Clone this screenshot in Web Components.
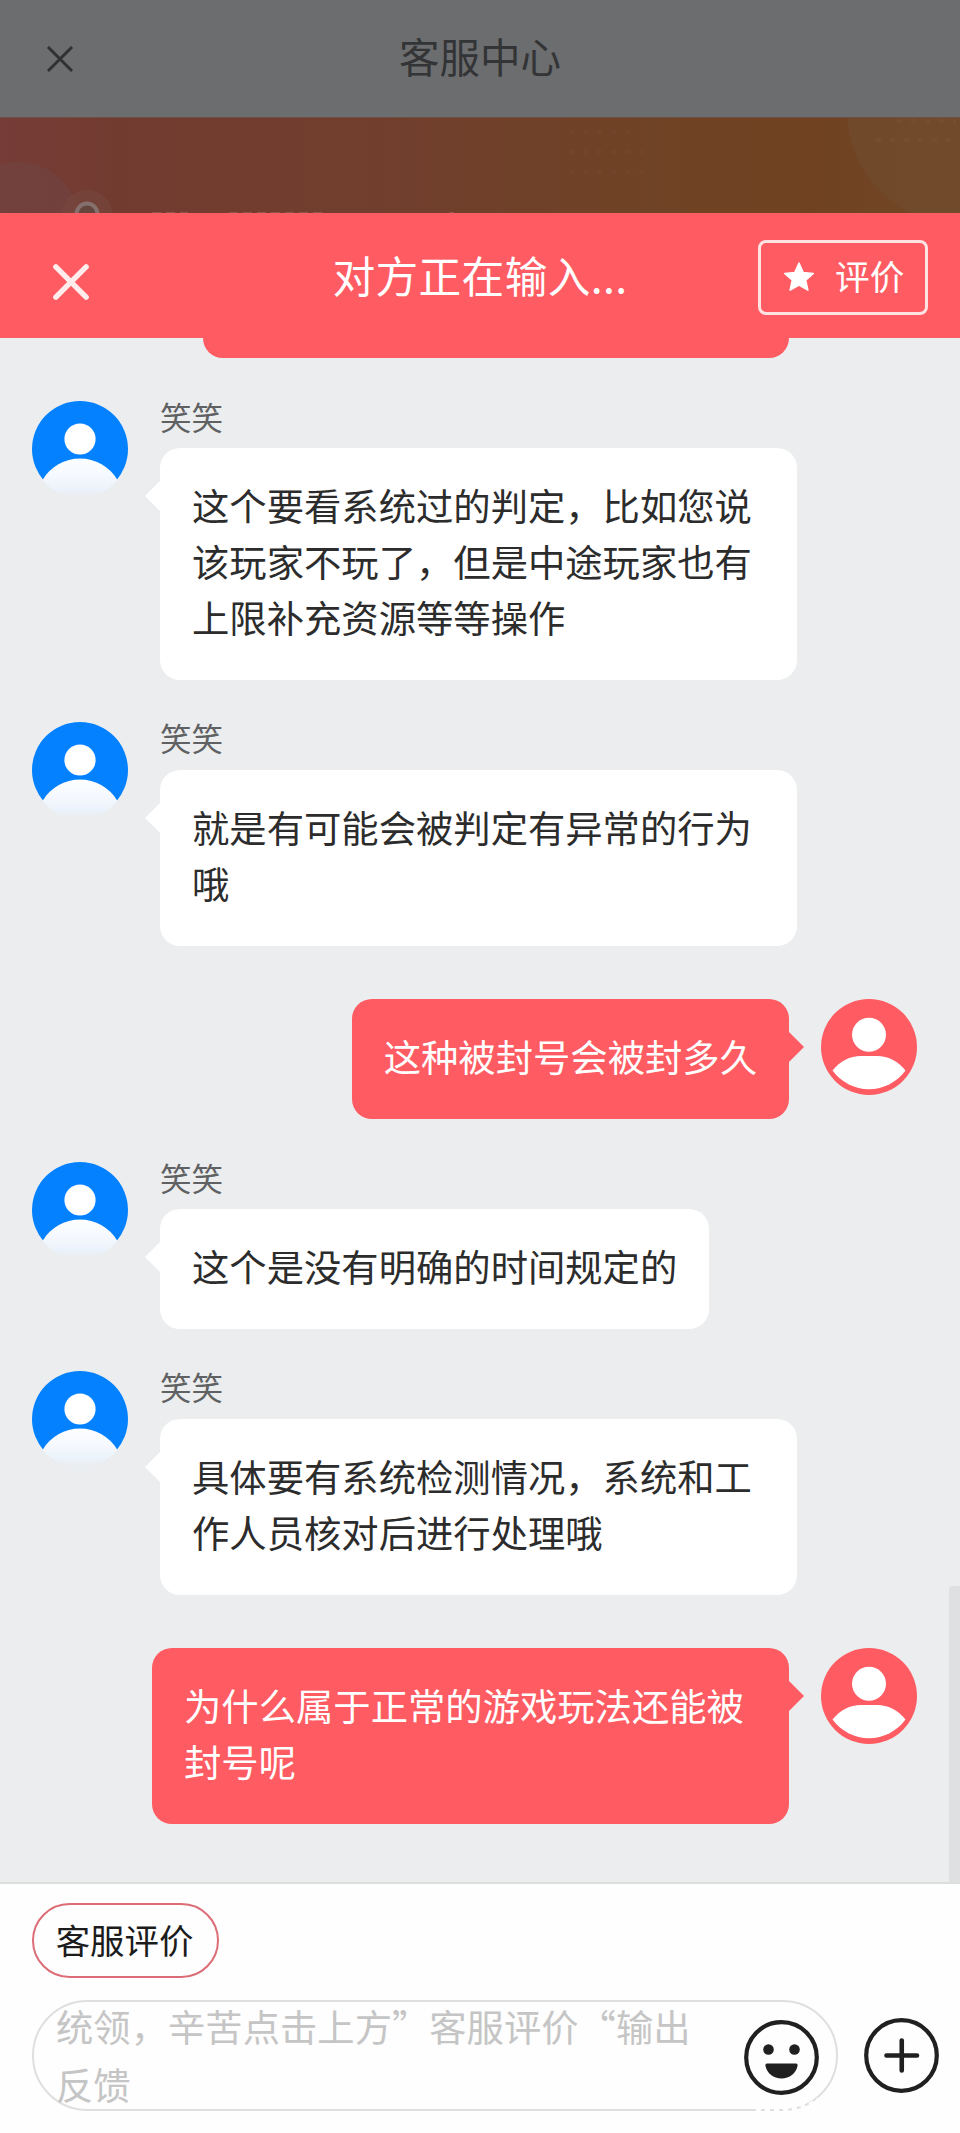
<!DOCTYPE html>
<html lang="zh-CN">
<head>
<meta charset="utf-8">
<title>客服中心</title>
<style>
html,body{margin:0;padding:0;background:#ebedee}
body{width:960px;height:2133px;overflow:hidden;font-family:"Noto Sans CJK SC","Noto Sans",sans-serif;color:#2d2d2d}
</style>
</head>
<body>
<service-page>
  <dimmed-bar slot="top">客服中心</dimmed-bar>
  <promo-banner slot="top"></promo-banner>
  <chat-header slot="top" action="评价">对方正在输入...</chat-header>
  <chat-message name="笑笑">这个要看系统过的判定，比如您说该玩家不玩了，但是中途玩家也有上限补充资源等等操作</chat-message>
  <chat-message name="笑笑">就是有可能会被判定有异常的行为哦</chat-message>
  <own-message>这种被封号会被封多久</own-message>
  <chat-message name="笑笑">这个是没有明确的时间规定的</chat-message>
  <chat-message name="笑笑">具体要有系统检测情况，系统和工作人员核对后进行处理哦</chat-message>
  <own-message>为什么属于正常的游戏玩法还能被封号呢</own-message>
  <chat-composer slot="bottom" chip="客服评价">统领，辛苦点击上方”客服评价“输出反馈</chat-composer>
</service-page>
<script>
const define = (name, render) => customElements.define(name, class extends HTMLElement {
  constructor() {
    super();
    this.attachShadow({ mode: "open" });
  }
  connectedCallback() {
    const t = document.createElement("template");
    t.innerHTML = render(this);
    this.shadowRoot.replaceChildren(t.content.cloneNode(true));
  }
});

define("service-page", () => `
<style>
:host{display:flex;flex-direction:column;width:960px;height:2133px;overflow:hidden}
main{flex:1;min-height:0;overflow:hidden;position:relative;background:#ebedee;display:flex;flex-direction:column;gap:42.6px}
.previous{flex:none;width:586px;height:20px;margin-left:203px;background:#ff5b62;border-radius:0 0 20px 20px}
.scroll{position:absolute;right:0;bottom:0;width:11px;height:296px;background:#dfe0e2;border-radius:4px 0 0 0}
</style>
<slot name="top"></slot>
<main><div class="previous"></div><slot></slot><div class="scroll"></div></main>
<slot name="bottom"></slot>`);

define("dimmed-bar", () => `
<style>
:host{display:grid;grid-template-columns:120px 1fr 120px;align-items:center;flex:none;height:117px;background:#6c6d6f;color:#333436}
svg{margin-left:46px;display:block}
span{text-align:center;font-size:40.5px;line-height:60px;margin-top:-5px}
</style>
<svg width="28" height="28" viewBox="0 0 28 28" fill="none" stroke="#303133" stroke-width="3"><path d="M2 2 26 26M26 2 2 26"/></svg>
<span><slot></slot></span>`);

define("promo-banner", () => `
<style>:host{display:block;flex:none;height:96px}svg{display:block}</style>
<svg width="960" height="96" viewBox="0 0 960 96">
<defs><linearGradient id="g"><stop offset="0" stop-color="#763c37"/><stop offset=".12" stop-color="#723b30"/><stop offset=".4" stop-color="#713e2d"/><stop offset=".68" stop-color="#6f4325"/><stop offset=".85" stop-color="#704222"/><stop offset="1" stop-color="#704827"/></linearGradient></defs>
<rect width="960" height="96" fill="url(#g)"/>
<circle cx="18" cy="106" r="61" fill="#72423e" opacity=".8"/>
<circle cx="960" cy="-6" r="113" fill="#714b2d" opacity=".7"/>
<circle cx="87" cy="99" r="26" fill="#77463d" opacity=".65"/>
<circle cx="87" cy="97" r="10.5" fill="#65463f" stroke="#86706d" stroke-width="4"/>
<g fill="none" stroke="#7b4936" stroke-width="4" stroke-dasharray="5 9" opacity=".35"><path d="M569 15H635M569 35H648M569 55H648"/></g>
<g fill="none" stroke="#7d5638" stroke-width="4" stroke-dasharray="5 9" opacity=".4"><path d="M897 4H956M876 23H956"/></g>
<path d="M152 95.5H188M229 95.5H326M449 95.5H454" stroke="#9b6258" stroke-dasharray="9 5" opacity=".7"/>
<path d="M0 .5H960" stroke="#6d5148"/>
</svg>`);

define("chat-header", el => `
<style>
:host{display:grid;grid-template-columns:202px 1fr 202px;align-items:center;flex:none;height:125px;background:#ff5b62;color:#fff}
.close{display:block;margin:13px 0 0 51px}
.title{text-align:center;font-size:42.67px;letter-spacing:.4px;line-height:60px;white-space:nowrap;margin-top:-1px}
button{box-sizing:border-box;width:170px;height:75px;margin:3px 0 0;padding:0 0 0 21px;border:3px solid #ffe3e3;border-radius:8px;background:none;color:inherit;font:34.67px/50px "Noto Sans CJK SC",sans-serif;display:flex;align-items:center;gap:19px}
button svg{flex:none}
button span{margin-top:-4px}
</style>
<svg class="close" width="40" height="40" viewBox="0 0 41 41" fill="none" stroke="#ffecec" stroke-width="5.6" stroke-linecap="round"><path d="M5 5 36 36M36 5 5 36"/></svg>
<span class="title"><slot></slot></span>
<button><svg width="34" height="34" viewBox="0 0 34 34"><path d="M17 3 21.2 12.4 31.3 13.4 23.7 20.2 25.9 30.2 17 25 8.1 30.2 10.3 20.2 2.7 13.4 12.8 12.4Z" fill="#fff" stroke="#fff" stroke-width="1.5" stroke-linejoin="round"/></svg><span>${el.getAttribute("action")}</span></button>`);

define("agent-avatar", () => `
<style>:host{display:block;flex:none;width:96px;height:96px}svg{display:block}</style>
<svg width="96" height="96" viewBox="0 0 96 96">
<defs><clipPath id="c"><path d="M0 0H96V79H85.5A43.5 43.5 0 0 0 10.5 79H0Z"/></clipPath>
<linearGradient id="f" x1="0" y1="57" x2="0" y2="96" gradientUnits="userSpaceOnUse"><stop offset="0" stop-color="#fdfeff"/><stop offset=".5" stop-color="#f4f8fe"/><stop offset=".8" stop-color="#ebf2fb"/><stop offset="1" stop-color="#ebedee"/></linearGradient></defs>
<path d="M10.5 79A43.5 43.5 0 0 1 85.5 79A48 48 0 0 1 10.5 79Z" fill="url(#f)"/>
<circle cx="48" cy="48" r="48" fill="#0381fe" clip-path="url(#c)"/>
<circle cx="48" cy="38" r="15.6" fill="#fff"/>
</svg>`);

define("user-avatar", () => `
<style>:host{display:block;flex:none;width:96px;height:96px}svg{display:block}</style>
<svg width="96" height="96" viewBox="0 0 96 96">
<circle cx="48" cy="48" r="48" fill="#ff5b62"/>
<circle cx="48" cy="35.7" r="17" fill="#fff"/>
<path d="M11.5 71.5C19 62 29 57 40 57H56C67 57 77 62 84.5 71.5A45 45 0 0 1 11.5 71.5Z" fill="#fff"/>
</svg>`);

define("chat-message", el => `
<style>
:host{display:flex;align-items:flex-start;gap:32px;padding-left:32px;flex:none}
.name{box-sizing:border-box;font-size:31.5px;line-height:30px;height:47.3px;color:#606163}
.bubble{position:relative;box-sizing:border-box;width:fit-content;max-width:637px;padding:29.5px 32px 34.5px;background:#fff;border-radius:20px;font-size:37.33px;line-height:56px;color:#2c2c2c}
.tip{position:absolute;left:-15px;top:32px}
</style>
<agent-avatar></agent-avatar>
<div><div class="name">${el.getAttribute("name")}</div>
<div class="bubble"><svg class="tip" width="16" height="32" viewBox="0 0 16 32"><path d="M16 0 0 16 16 32Z" fill="#fff"/></svg><slot></slot></div></div>`);

define("own-message", () => `
<style>
:host{display:flex;align-items:flex-start;justify-content:flex-end;gap:32px;padding:10.6px 43px 0 0;flex:none}
.bubble{position:relative;box-sizing:border-box;max-width:637px;padding:29.5px 32px 34.5px;background:#ff5b62;border-radius:20px;font-size:37.33px;line-height:56px;color:#fff}
.tip{position:absolute;right:-15px;top:32px}
</style>
<div class="bubble"><svg class="tip" width="16" height="32" viewBox="0 0 16 32"><path d="M0 0 16 16 0 32Z" fill="#ff5b62"/></svg><slot></slot></div>
<user-avatar></user-avatar>`);

define("chat-composer", el => `
<style>
:host{display:flex;flex-direction:column;align-items:flex-start;gap:22px;box-sizing:border-box;flex:none;height:251px;padding:18.5px 21px 0 32px;border-top:2px solid #dcdddd;background:#fefefe}
.chip{box-sizing:border-box;width:187px;height:75px;border:2.5px solid #dc6c76;border-radius:38px;background:none;padding:0 2px 3px 0;font:34.4px/50px "Noto Sans CJK SC",sans-serif;color:#1c1c1c;text-align:center}
.row{display:flex;align-items:center;gap:26px}
.field{position:relative;box-sizing:border-box;width:806px;height:111px;border:2px solid #dfdfdf;border-radius:56px;padding:0 17px 0 22px;display:flex;justify-content:space-between}
p{margin:-5px 0 0;width:636px;font-size:37.33px;line-height:58.6px;color:#c5c5c5}
svg{display:block;flex:none}
.smile{margin-top:18px}
.wear{position:absolute;left:720px;top:96px}
</style>
<button class="chip">${el.getAttribute("chip")}</button>
<div class="row">
<div class="field"><p><slot></slot></p>
<svg class="smile" width="75" height="75" viewBox="0 0 75 75"><circle cx="37.5" cy="37.5" r="35.3" fill="none" stroke="#202020" stroke-width="4.2"/><circle cx="24.5" cy="29.5" r="5.3" fill="#202020"/><circle cx="50.5" cy="29.5" r="5.3" fill="#202020"/><path d="M23 43.5H52Q54 43.5 53.5 46C52 53.5 45.5 58.5 37.5 58.5S23 53.5 21.5 46Q21 43.5 23 43.5Z" fill="#202020"/></svg>
<svg class="wear" width="70" height="14" viewBox="0 0 70 14" fill="none" stroke="#fefefe" stroke-width="4"><path d="M2 12H30Q50 12 68 -1" stroke-dasharray="5 4"/></svg>
</div>
<svg width="75" height="75" viewBox="0 0 75 75" fill="none" stroke="#202020" stroke-linecap="round"><circle cx="37.5" cy="37.5" r="35.3" stroke-width="4.2"/><path d="M22.5 37.5H53M37.75 22.5V52.5" stroke-width="4.6"/></svg>
</div>`);
</script>
</body>
</html>
